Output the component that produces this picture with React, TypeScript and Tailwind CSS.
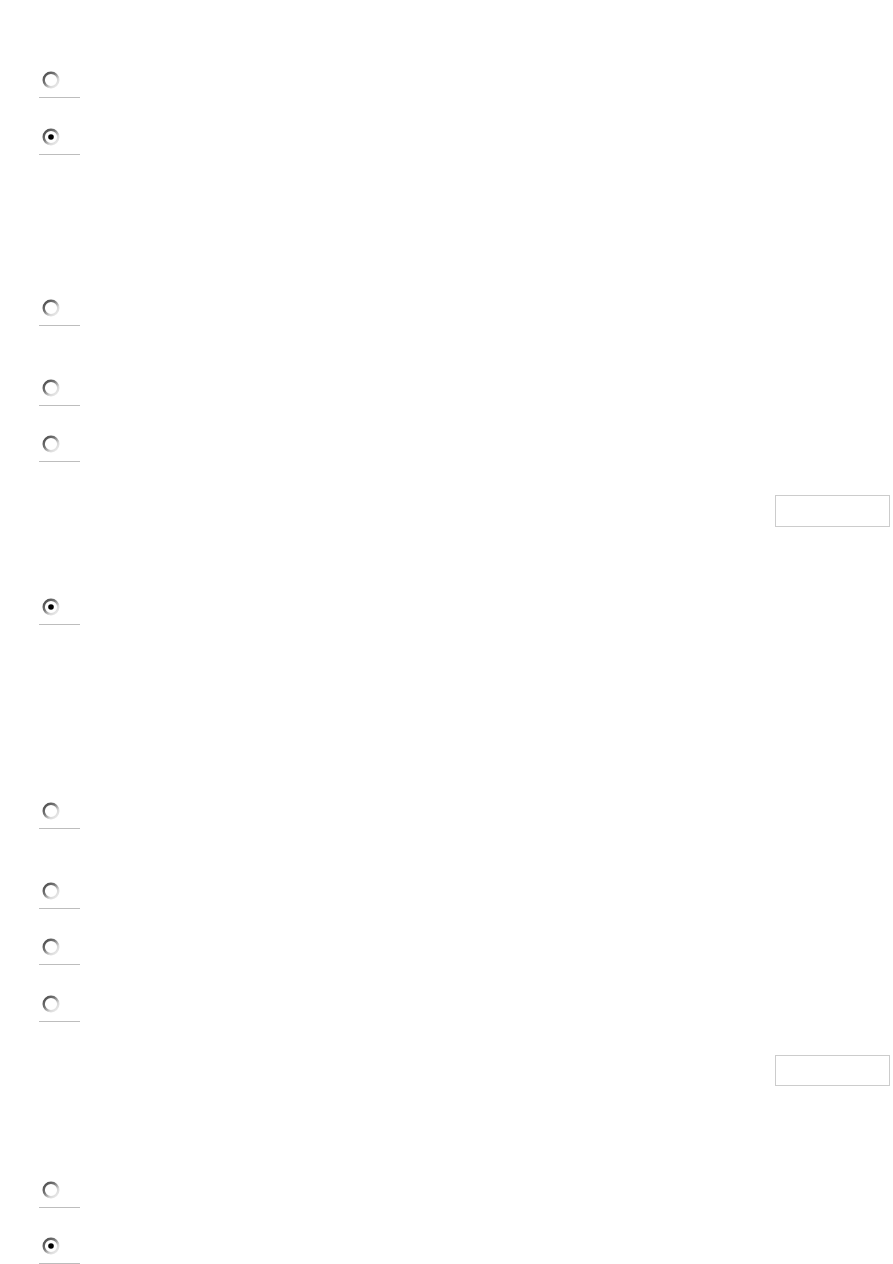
import React from "react";

function Radio({ checked }: { checked?: boolean }) {
  const id = checked ? "gc" : "gu";
  return (
    <svg width="18" height="18" viewBox="0 0 18 18" className="block">
      <defs>
        <linearGradient id={id} x1="0" y1="0" x2="1" y2="1">
          <stop offset="0" stopColor="#444444" />
          <stop offset="0.4" stopColor="#777777" />
          <stop offset="0.7" stopColor="#d8d8d8" />
          <stop offset="1" stopColor="#f0f0f0" />
        </linearGradient>
      </defs>
      <circle cx="9" cy="9" r="7.3" fill="#ffffff" stroke={`url(#${id})`} strokeWidth="2.4" />
      {checked && <circle cx="9" cy="9" r="2.8" fill="#000000" />}
    </svg>
  );
}

function Row({ checked, mt }: { checked?: boolean; mt: string }) {
  return (
    <div className={`${mt} ml-[39px] w-[41px] border-b border-[#bdbdbd]`}>
      <div className="ml-[3px] mb-[8px] h-[18px]">
        <Radio checked={checked} />
      </div>
    </div>
  );
}

function Box({ mt, h }: { mt: string; h: string }) {
  return <div className={`${mt} ${h} ml-[775px] w-[115px] border border-[#cccccc] bg-white`} />;
}

export default function App() {
  return (
    <div className="w-[893px] h-[1264px] bg-white overflow-hidden" style={{ fontFamily: '"Liberation Sans", Arial, sans-serif' }}>
      <div className="pt-[71px] flex flex-col">
        <Row mt="mt-0" />
        <Row mt="mt-[30px]" checked />
        <Row mt="mt-[144px]" />
        <Row mt="mt-[53px]" />
        <Row mt="mt-[29px]" />
        <Box mt="mt-[33px]" h="h-[32px]" />
        <Row mt="mt-[71px]" checked />
        <Row mt="mt-[177px]" />
        <Row mt="mt-[53px]" />
        <Row mt="mt-[29px]" />
        <Row mt="mt-[30px]" />
        <Box mt="mt-[33px]" h="h-[31px]" />
        <Row mt="mt-[95px]" />
        <Row mt="mt-[29px]" checked />
      </div>
    </div>
  );
}
